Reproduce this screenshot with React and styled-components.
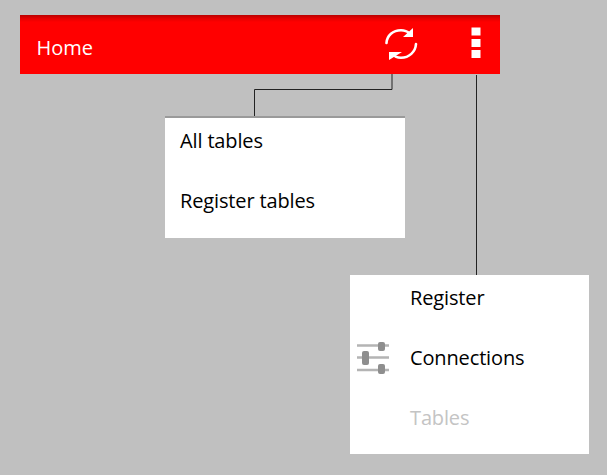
import React from "react";
import styled, { createGlobalStyle } from "styled-components";

const Global = createGlobalStyle`
  html, body { margin: 0; padding: 0; background: #c0c0c0; }
  #root { width: 607px; height: 475px; overflow: hidden; }
`;

const Canvas = styled.div`
  position: relative;
  width: 607px;
  height: 475px;
  background: #c0c0c0;
  font-family: "Open Sans", "Noto Sans", sans-serif;
  padding: 15px 0 0 20px;
  box-sizing: border-box;
`;

const ActionBar = styled.header`
  width: 480px;
  height: 59px;
  box-sizing: border-box;
  display: flex;
  align-items: center;
  background: linear-gradient(to bottom, #b80000 0, #e00000 3px, #ff0000 7px);
  color: #fff;
  padding: 0 16px 0 16.5px;
`;

const Title = styled.div`
  flex: 1;
  font-size: 20px;
  line-height: 26px;
  margin-top: 7px;
`;

const ActionIcon = styled.svg`
  display: block;
  margin-right: ${(p) => p.$right}px;
  margin-top: ${(p) => p.$top}px;
`;

const Menu = styled.div`
  position: absolute;
  left: ${(p) => p.$left}px;
  top: ${(p) => p.$top}px;
  width: ${(p) => p.$width}px;
  background: #fff;
  border-top: ${(p) => (p.$rule ? "2px solid #9a9a9a" : "none")};
`;

const Item = styled.div`
  height: ${(p) => p.$height || 60}px;
  display: flex;
  align-items: center;
  box-sizing: border-box;
  padding-left: ${(p) => p.$indent}px;
  padding-bottom: ${(p) => p.$lift}px;
  font-size: 20px;
  letter-spacing: -0.14px;
  color: ${(p) => (p.$disabled ? "#c4c4c4" : "#000")};
  position: relative;
`;

const ItemIcon = styled.svg`
  position: absolute;
  left: 7px;
  top: 7px;
`;

const Connector = styled.svg`
  position: absolute;
  left: 0;
  top: 0;
  pointer-events: none;
`;

const Refresh = () => (
  <ActionIcon width="38" height="36" viewBox="0 0 38 36" $right={51} $top={-1}>
    <g fill="none" stroke="#fff" strokeWidth="2.6" strokeLinecap="round">
      <path d="M4.5 17 C5 9.5 11 4.3 19 4.3 C22.5 4.3 25.5 5.5 27.5 7.5" />
      <path d="M34 18 C33.5 26 27 31.7 19 31.7 C15.5 31.7 12.5 30.5 10.5 28" />
    </g>
    <path d="M31 2 L31 11 L21 11 Z" fill="#fff" />
    <path d="M7 34 L7 26 L20 26 Z" fill="#fff" />
  </ActionIcon>
);

const Overflow = () => (
  <ActionIcon width="10" height="32" viewBox="0 0 10 32" $right={3} $top={-3}>
    <rect x="0.5" y="0.5" width="9" height="8" fill="#fff" />
    <rect x="0.5" y="12" width="9" height="8" fill="#fff" />
    <rect x="0.5" y="23" width="9" height="8" fill="#fff" />
  </ActionIcon>
);

const Sliders = () => (
  <ItemIcon width="33" height="33" viewBox="0 0 33 33">
    <g stroke="#b4b4b4" strokeWidth="2.4">
      <path d="M0 3.5H32M0 15.5H32M0 28H32" />
    </g>
    <g fill="#8e8e8e">
      <rect x="21" y="0" width="7" height="9" rx="2" />
      <rect x="5" y="9" width="7" height="14" rx="2" />
      <rect x="21" y="22" width="7" height="10" rx="2" />
    </g>
  </ItemIcon>
);

export default function App() {
  return (
    <Canvas>
      <Global />
      <ActionBar>
        <Title>Home</Title>
        <Refresh />
        <Overflow />
      </ActionBar>
      <Connector width="607" height="475" viewBox="0 0 607 475">
        <path d="M392 74V89.5H254.5V116" fill="none" stroke="#222" strokeWidth="1" />
        <path d="M476.5 75V275" fill="none" stroke="#222" strokeWidth="1" />
      </Connector>
      <Menu $left={165} $top={116} $width={240} $rule>
        <Item $indent={15} $lift={16}>All tables</Item>
        <Item $indent={15} $lift={16}>Register tables</Item>
      </Menu>
      <Menu $left={350} $top={275} $width={239}>
        <Item $indent={60} $lift={15}>Register</Item>
        <Item $indent={60} $lift={15}><Sliders />Connections</Item>
        <Item $indent={60} $lift={15} $height={59} $disabled>Tables</Item>
      </Menu>
    </Canvas>
  );
}
